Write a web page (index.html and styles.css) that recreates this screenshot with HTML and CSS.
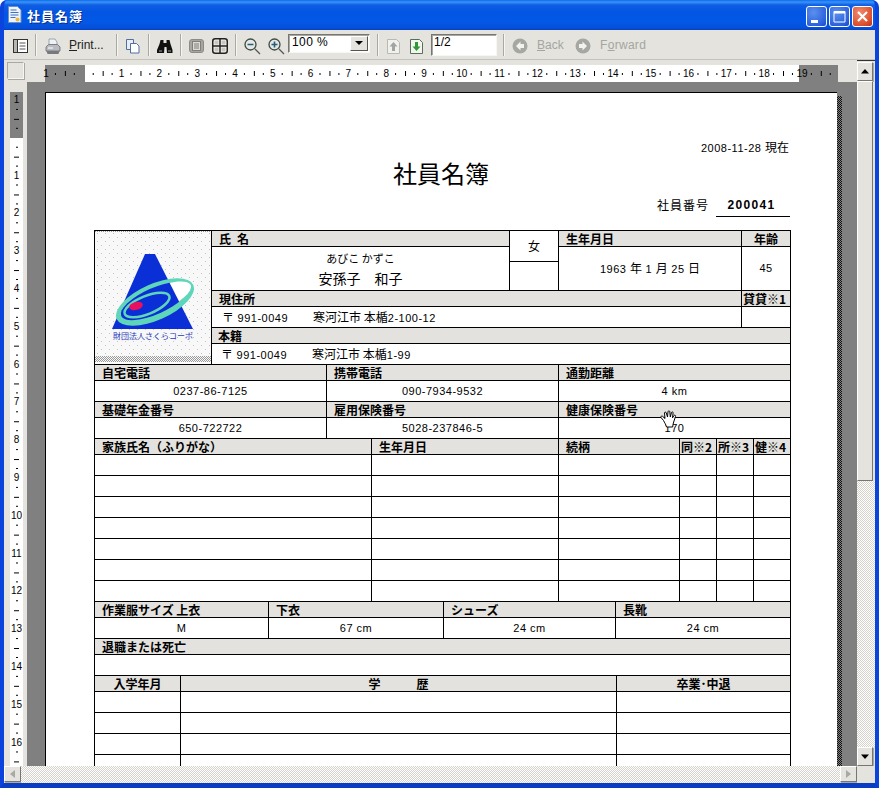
FILE: index.html
```html
<!DOCTYPE html>
<html lang="ja">
<head>
<meta charset="utf-8">
<title>社員名簿</title>
<link rel="stylesheet" href="styles.css">
</head>
<body>
<div class="window">
  <header class="titlebar">
    <svg class="title-icon" width="15" height="17" viewBox="0 0 15 17"><path d="M1.5.5h9l3.5 3.5v12.500h-12.500z" fill="#eef3fb" stroke="#6d8fc4"/><path d="M3.500 4h6M3.500 6.500h8M3.500 9h8M3.500 11.500h5" stroke="#3f6fc0"/><circle cx="10.500" cy="13.500" r="2" fill="#e8b93a"/></svg>
    <span class="title-text">社員名簿</span>
    <div class="caption-buttons">
      <span class="cap cap-blue"><svg width="21" height="21" viewBox="0 0 21 21"><rect x="5" y="14" width="7" height="3" fill="#fff"/></svg></span>
      <span class="cap cap-blue"><svg width="21" height="21" viewBox="0 0 21 21"><path d="M5 5.500h11v10.500h-11z" fill="none" stroke="#fff"/><rect x="5" y="5" width="11" height="2.500" fill="#fff"/></svg></span>
      <span class="cap cap-red"><svg width="21" height="21" viewBox="0 0 21 21"><path d="M6 6l9 9M15 6l-9 9" stroke="#fff" stroke-width="2.200"/></svg></span>
    </div>
  </header>

  <div class="toolbar">
    <svg class="ico i-panel" width="15" height="14" viewBox="0 0 15 14"><rect x=".5" y=".5" width="14" height="13" fill="#fff" stroke="#333"/><rect x="1" y="1" width="3.500" height="12" fill="#b8b6ae"/><path d="M4.500 1v12" stroke="#333"/><path d="M6.500 4h6M6.500 7h6M6.500 10h6" stroke="#555"/></svg>
    <i class="sep s-a"></i>
    <svg class="ico i-print" width="16" height="17" viewBox="0 0 16 17"><path d="M4 1h6l2 3v4H4z" fill="#eef2f6" stroke="#8a93a0" stroke-width=".8"/><path d="M1 9l2.500-2.500h9L15 9v4H1z" fill="#b9bbc0" stroke="#666a70" stroke-width=".8"/><path d="M1.500 13h13l-1 3h-11z" fill="#77797e"/><path d="M3 10h5" stroke="#fff"/></svg>
    <span class="tb-label l-print"><u>P</u>rint...</span>
    <i class="sep s-b"></i>
    <svg class="ico i-copy" width="14" height="15" viewBox="0 0 14 15"><path d="M.5.500h7v10h-7z" fill="#e8edf6" stroke="#52709f"/><path d="M4.500 4.500h6l2.500 2.500v7h-8.500z" fill="#fff" stroke="#52709f"/></svg>
    <i class="sep s-c"></i>
    <svg class="ico i-bino" width="16" height="15" viewBox="0 0 16 15"><path d="M3.500 1h3v3h3v-3h3l1 4 2 6v3h-5.500l-.5-6h-2l-.5 6H0v-3l2.500-6z" fill="#111"/><path d="M2 11h3v2H2zM11 11h3v2h-3z" fill="#5a5a5a"/></svg>
    <i class="sep s-d"></i>
    <svg class="ico i-single" width="15" height="14" viewBox="0 0 15 14"><rect x=".5" y=".5" width="14" height="13" rx="2.500" fill="#a7a6a0" stroke="#8c8b86"/><rect x="3.500" y="2.500" width="8" height="9" fill="#dcdbd5" stroke="#807f7a"/><path d="M5 5h5M5 7h5M5 9h5" stroke="#807f7a"/></svg>
    <svg class="ico i-grid" width="16" height="16" viewBox="0 0 16 16"><rect x=".75" y=".75" width="14.500" height="14.500" rx="2.500" fill="#f4f3ee" stroke="#222" stroke-width="1.500"/><path d="M8 1v14M1 8h14" stroke="#222" stroke-width="1.500"/><path d="M2.500 2.500h4v4h-4zM9.500 2.500h4v4h-4zM2.500 9.500h4v4h-4zM9.500 9.500h4v4h-4z" fill="#c8c7c1"/></svg>
    <i class="sep s-e"></i>
    <svg class="ico i-zoom1" width="17" height="17" viewBox="0 0 17 17"><circle cx="6.500" cy="6.500" r="5.500" fill="#e4e8e4" stroke="#3f4a44" stroke-width="1.300"/><path d="M3.500 6.500h6" stroke="#245c7d" stroke-width="1.600"/><path d="M11 11l5 5" stroke="#555" stroke-width="1.300"/></svg>
    <svg class="ico i-zoom2" width="17" height="17" viewBox="0 0 17 17"><circle cx="6.500" cy="6.500" r="5.500" fill="#e4e8e4" stroke="#3f4a44" stroke-width="1.300"/><path d="M3.500 6.500h6M6.500 3.500v6" stroke="#245c7d" stroke-width="1.600"/><path d="M11 11l5 5" stroke="#555" stroke-width="1.300"/></svg>
    <div class="combo"><span class="combo-text">100 %</span><span class="combo-btn"><svg width="8" height="4" viewBox="0 0 8 4"><path d="M0 0h8L4 4z" fill="#000"/></svg></span></div>
    <i class="sep s-f"></i>
    <svg class="ico i-up" width="13" height="15" viewBox="0 0 13 15"><path d="M.5.500h9l3 3v11h-12z" fill="#f1f0ec" stroke="#b9b8b2"/><path d="M6.500 3l4 4.500H8v4.500H5V7.500H2.500z" fill="#9fa5a3"/></svg>
    <svg class="ico i-down" width="13" height="15" viewBox="0 0 13 15"><path d="M.5.500h9l3 3v11h-12z" fill="#f5f4ee" stroke="#55705a"/><path d="M5 3h3v4.500h2.500l-4 4.500-4-4.500H5z" fill="#2f9a35"/></svg>
    <div class="pagebox">1/2</div>
    <i class="sep s-g"></i>
    <svg class="ico i-back" width="16" height="16" viewBox="0 0 16 16"><circle cx="8" cy="8" r="7.500" fill="#a6a6a2"/><path d="M8.500 3.500L4 8l4.500 4.500V10H12V6H8.500z" fill="#f2f2ee"/></svg>
    <span class="tb-label dis l-back"><u>B</u>ack</span>
    <svg class="ico i-fwd" width="16" height="16" viewBox="0 0 16 16"><circle cx="8" cy="8" r="7.500" fill="#a6a6a2"/><path d="M7.500 3.500L12 8l-4.500 4.500V10H4V6h3.500z" fill="#f2f2ee"/></svg>
    <span class="tb-label dis l-fwd">F<u>o</u>rward</span>
  </div>

  <div class="client">
    <div class="leftcol">
      <div class="rulerbar">
        <div class="corner"></div>
        <div class="hruler"><div class="hr-inner"><span>1</span><span></span><span>1</span><span>2</span><span>3</span><span>4</span><span>5</span><span>6</span><span>7</span><span>8</span><span>9</span><span>10</span><span>11</span><span>12</span><span>13</span><span>14</span><span>15</span><span>16</span><span>17</span><span>18</span><span>19</span></div></div>
      </div>
      <div class="workarea">
        <div class="vcol"><div class="vruler"><div class="vr-inner"><span>1</span><span></span><span>1</span><span>2</span><span>3</span><span>4</span><span>5</span><span>6</span><span>7</span><span>8</span><span>9</span><span>10</span><span>11</span><span>12</span><span>13</span><span>14</span><span>15</span><span>16</span></div></div></div>
        <div class="view">
          <main class="page">
            <p class="date">2008-11-28 <span class="j">現在</span></p>
            <h1 class="doc-title">社員名簿</h1>
            <div class="empno"><span class="j empno-label">社員番号</span><b class="empno-val">200041</b></div>

            <section class="form">
              <div class="grid g-top">
                <div class="c photo">
                  <svg width="116" height="131" viewBox="0 0 116 131">
                    <defs>
                      <pattern id="dots" width="8" height="8" patternUnits="userSpaceOnUse"><rect x="2" y="2" width="1" height="1" fill="#c4c4c4"/><rect x="6" y="6" width="1" height="1" fill="#c4c4c4"/></pattern>
                      <pattern id="dith" width="2" height="2" patternUnits="userSpaceOnUse"><rect width="1" height="1" fill="#999"/><rect x="1" y="1" width="1" height="1" fill="#999"/></pattern>
                      <clipPath id="inner"><ellipse cx="60" cy="70" rx="37" ry="13" transform="rotate(-24 60 70)"/></clipPath>
                    </defs>
                    <rect width="116" height="131" fill="#f8f8f8"/>
                    <rect width="116" height="131" fill="url(#dots)"/>
                    <rect y="0" width="116" height="1" fill="url(#dith)"/>
                    <rect y="125" width="116" height="6" fill="url(#dith)"/>
                    <path d="M50 23h10l38 75H17z" fill="#0b2fd6"/>
                    <ellipse cx="60" cy="71" rx="42" ry="18" transform="rotate(-24 60 71)" fill="#5fd6ba"/>
                    <ellipse cx="62" cy="69" rx="37" ry="12" transform="rotate(-24 62 69)" fill="#fff"/>
                    <path d="M50 23h10l38 75H17z" fill="#0b2fd6" clip-path="url(#inner)"/>
                    <ellipse cx="52" cy="74" rx="24" ry="9" transform="rotate(-22 52 74)" fill="none" stroke="#5fd6ba" stroke-width="2.500"/>
                    <ellipse cx="41" cy="75" rx="7" ry="4" transform="rotate(-15 41 75)" fill="#e8115f"/>
                    <text class="logo-text" x="18" y="108">財団法人さくらコーポ</text>
                  </svg>
                </div>
                <div class="c h name-h">氏&ensp;名</div>
                <div class="c sex">女</div>
                <div class="c sex2"></div>
                <div class="c h birth-h">生年月日</div>
                <div class="c h center age-h">年齢</div>
                <div class="c name-v"><span class="kana">あびこ かずこ</span><span class="kanji">安孫子&emsp;和子</span></div>
                <div class="c val birth-v">1963 <span class="j">年</span> 1 <span class="j">月</span> 25 <span class="j">日</span></div>
                <div class="c val age-v">45</div>
                <div class="c h addr-h">現住所</div>
                <div class="c h rent-h">貸貸※1</div>
                <div class="c val addr addr-v"><span class="j">〒</span> 991-0049<span class="j gap">寒河江市 本楯</span>2-100-12</div>
                <div class="c rent-v"></div>
                <div class="c h reg-h">本籍</div>
                <div class="c val addr reg-v"><span class="j">〒</span> 991-0049<span class="j gap">寒河江市 本楯</span>1-99</div>
              </div>

              <div class="grid g-3">
                <div class="c h">自宅電話</div><div class="c h">携帯電話</div><div class="c h">通勤距離</div>
                <div class="c v val">0237-86-7125</div><div class="c v val">090-7934-9532</div><div class="c v val">4 km</div>
                <div class="c h">基礎年金番号</div><div class="c h">雇用保険番号</div><div class="c h">健康保険番号</div>
                <div class="c v val">650-722722</div><div class="c v val">5028-237846-5</div><div class="c v val">170</div>
              </div>

              <div class="grid g-family">
                <div class="c h">家族氏名（ふりがな）</div><div class="c h">生年月日</div><div class="c h">続柄</div><div class="c h tight">同※2</div><div class="c h tight">所※3</div><div class="c h tight">健※4</div>
                <div class="c v"></div><div class="c v"></div><div class="c v"></div><div class="c v"></div><div class="c v"></div><div class="c v"></div>
                <div class="c v"></div><div class="c v"></div><div class="c v"></div><div class="c v"></div><div class="c v"></div><div class="c v"></div>
                <div class="c v"></div><div class="c v"></div><div class="c v"></div><div class="c v"></div><div class="c v"></div><div class="c v"></div>
                <div class="c v"></div><div class="c v"></div><div class="c v"></div><div class="c v"></div><div class="c v"></div><div class="c v"></div>
                <div class="c v"></div><div class="c v"></div><div class="c v"></div><div class="c v"></div><div class="c v"></div><div class="c v"></div>
                <div class="c v"></div><div class="c v"></div><div class="c v"></div><div class="c v"></div><div class="c v"></div><div class="c v"></div>
                <div class="c v"></div><div class="c v"></div><div class="c v"></div><div class="c v"></div><div class="c v"></div><div class="c v"></div>
              </div>

              <div class="grid g-size">
                <div class="c h">作業服サイズ 上衣</div><div class="c h">下衣</div><div class="c h">シューズ</div><div class="c h">長靴</div>
                <div class="c v val">M</div><div class="c v val">67 cm</div><div class="c v val">24 cm</div><div class="c v val">24 cm</div>
              </div>

              <div class="grid g-one">
                <div class="c h">退職または死亡</div>
                <div class="c v"></div>
              </div>

              <div class="grid g-edu">
                <div class="c h center">入学年月</div><div class="c h center">学&emsp;&emsp;&emsp;歴</div><div class="c h center">卒業･中退</div>
                <div class="c v"></div><div class="c v"></div><div class="c v"></div>
                <div class="c v"></div><div class="c v"></div><div class="c v"></div>
                <div class="c v"></div><div class="c v"></div><div class="c v"></div>
                <div class="c v"></div><div class="c v"></div><div class="c v"></div>
              </div>
            </section>

            <svg class="hand" width="18" height="22" viewBox="0 0 18 20"><path d="M3.500 10.500L1 7.500c-.6-1 .8-2 1.600-1.200L5 8.500 4.500 3c0-1.200 1.600-1.200 1.800 0L7.500 7 8 1.700c.1-1.100 1.700-1.100 1.800 0L10.300 7l1.200-4.500c.3-1 1.700-.7 1.600.3l-.6 5 1.600-2.300c.6-.8 1.800-.1 1.400.9l-1.800 5.600c-.4 1.500-1 3-1 5H6.500c-.3-2-2-4.500-3-6.500z" fill="#fff" stroke="#000"/></svg>
          </main>
          <div class="shadow"></div>
        </div>
      </div>
    </div>
    <aside class="vscroll">
      <span class="sbtn sb-up"><svg width="8" height="5" viewBox="0 0 8 5"><path d="M0 4.500h8L4 0z" fill="#000"/></svg></span>
      <div class="vthumb"></div>
      <div class="vtrack"></div>
      <span class="sbtn sb-down"><svg width="8" height="5" viewBox="0 0 8 5"><path d="M0 .5h8L4 5z" fill="#000"/></svg></span>
    </aside>
  </div>
  <div class="hscroll">
    <span class="sbtn sb-h"><svg width="5" height="8" viewBox="0 0 5 8"><path d="M5 0v8L0 4z" fill="#a8a8a4"/></svg></span>
    <div class="htrack"></div>
    <span class="sbtn sb-h"><svg width="5" height="8" viewBox="0 0 5 8"><path d="M0 0v8l5-4z" fill="#a8a8a4"/></svg></span>
    <div class="hcorner"></div>
  </div>
</div>
</body>
</html>
```

FILE: styles.css
```css
* { box-sizing: border-box; }
html, body { margin: 0; padding: 0; width: 879px; height: 788px; overflow: hidden; background: #fff; }
body { font-family: "Liberation Sans", "Noto Sans CJK JP", sans-serif; font-size: 12px; color: #000; }

.window {
  width: 879px; height: 788px; display: flex; flex-direction: column;
  background: #0a3fd0; border-radius: 7px 7px 0 0; overflow: hidden;
  border-left: 4px solid #0a44dc; border-right: 4px solid #0a44dc; border-bottom: 5px solid #0b3cc4;
}
.titlebar {
  height: 30px; margin: 0 -4px; padding-left: 7px; display: flex; align-items: center; flex: none;
  background: linear-gradient(#0a6cf0 0, #3b93f5 2px, #0f5fe4 5px, #0355e3 12px, #0358e6 22px, #0650da 28px, #0342bd 30px);
}
.title-icon { flex: none; margin-top: -1px; }
.title-text {
  margin-left: 5px; color: #fff; font: bold 13px "Noto Sans CJK JP", sans-serif; letter-spacing: 1px;
  text-shadow: 1px 1px 0 #0a2f8e;
}
.caption-buttons { margin-left: auto; margin-right: 6px; display: flex; gap: 2px; margin-top: 2px; }
.cap { width: 21px; height: 21px; border: 1px solid #fff; border-radius: 3px; display: block; overflow: hidden; }
.cap svg { display: block; margin: -1px; }
.cap-blue { background: radial-gradient(circle at 35% 30%, #5b90ee, #2a5fdc 75%, #1c47c0); }
.cap-red { background: radial-gradient(circle at 35% 30%, #f08a70, #dc4f2c 70%, #b8301a); }

.toolbar {
  height: 30px; flex: none; display: flex; align-items: center; position: relative;
  background: #e4e3de; border-bottom: 1px solid #c4c3bd;
}
.ico { flex: none; display: block; margin-top: 3px; }
.sep { flex: none; width: 1px; height: 22px; background: #a9a8a2; box-shadow: 1px 0 0 #f6f6f2; }
.i-panel { margin-left: 9px; }
.s-a { margin-left: 7px; }
.i-print { margin-left: 9px; }
.tb-label { font: 12px "Liberation Sans", sans-serif; white-space: nowrap; color: #222; flex: none; }
.l-print { margin-left: 8px; width: 36px; }
.s-b { margin-left: 11px; }
.i-copy { margin-left: 9px; }
.s-c { margin-left: 8px; }
.i-bino { margin-left: 8px; }
.s-d { margin-left: 7px; }
.i-single { margin-left: 8px; }
.i-grid { margin-left: 8px; }
.s-e { margin-left: 7px; }
.i-zoom1 { margin-left: 8px; }
.i-zoom2 { margin-left: 7px; }
.combo {
  flex: none; margin-left: 3px; margin-top: -3px; width: 82px; height: 19px; display: flex; align-items: stretch;
  background: #fff; border: 1px solid; border-color: #77766f #f6f6f2 #f6f6f2 #77766f; box-shadow: inset 1px 1px 0 #a9a8a2;
}
.combo-text { flex: 1; padding-left: 3px; font: 12px/14px "Liberation Sans", sans-serif; letter-spacing: .4px; }
.combo-btn {
  width: 18px; margin: 1px; background: #e4e3de; display: flex; align-items: center; justify-content: center;
  border: 1px solid; border-color: #fff #55544f #55544f #fff;
}
.combo-btn svg { display: block; }
.s-f { margin-left: 7px; }
.i-up { margin-left: 9px; }
.i-down { margin-left: 10px; }
.pagebox {
  flex: none; margin-left: 8px; width: 66px; height: 22px; background: #fff; padding-left: 2px;
  font: 12px/15px "Liberation Sans", sans-serif; border: 1px solid; border-color: #77766f #f6f6f2 #f6f6f2 #77766f;
  box-shadow: inset 1px 1px 0 #a9a8a2;
}
.s-g { margin-left: 6px; }
.i-back { margin-left: 8px; }
.dis { color: #a5a5a1; }
.l-back { margin-left: 9px; width: 29px; }
.i-fwd { margin-left: 9px; }
.l-fwd { margin-left: 9px; letter-spacing: .3px; }

.client { flex: 1; min-height: 0; display: flex; background: #e4e3de; }
.leftcol { width: 853px; flex: none; display: flex; flex-direction: column; min-height: 0; }
.rulerbar { height: 22px; flex: none; display: flex; background: #e4e3de; }
.corner { width: 17px; height: 17px; margin: 2px 0 0 3px; flex: none; background: #e4e3de; border: 1px solid; border-color: #a9a8a2 #f6f6f2 #f6f6f2 #a9a8a2; box-shadow: 1px 1px 0 #a9a8a2; }
.hruler {
  width: 793px; height: 17px; margin: 5px 0 0 21px; flex: none;
  background: linear-gradient(90deg, #808080 40px, #fff 40px, #fff 754px, #808080 754px);
}
.hr-inner {
  display: flex; height: 17px; margin-left: -5px; width: 798px; overflow: visible;
  font: 10px/17px "Liberation Sans", sans-serif;
  background-image:
    linear-gradient(90deg, transparent 15px, #000 15px, #000 16px, transparent 16px, transparent 34px, #000 34px, #000 35px, transparent 35px),
    linear-gradient(90deg, transparent 25px, #000 25px, #000 26px, transparent 26px);
  background-size: 37.8px 2px, 37.8px 5px;
  background-repeat: repeat-x;
  background-position: 0 8px, 0 6px;
}
.hr-inner span { flex: none; width: 12px; margin-right: 25.8px; text-align: center; }

.workarea { flex: 1; min-height: 0; display: flex; }
.vcol { width: 23px; flex: none; padding: 10px 4px 0 6px; background: #e4e3de; overflow: hidden; }
.vruler {
  height: 100%; overflow: hidden;
  background: linear-gradient(#808080 46px, #fff 46px);
}
.vr-inner {
  margin-top: 2px; height: 720px;
  font: 10px/12px "Liberation Sans", sans-serif; text-align: center;
  background-image:
    linear-gradient(transparent 15px, #000 15px, #000 16px, transparent 16px, transparent 34px, #000 34px, #000 35px, transparent 35px),
    linear-gradient(transparent 25px, #000 25px, #000 26px, transparent 26px);
  background-size: 2px 37.8px, 5px 37.8px;
  background-repeat: repeat-y;
  background-position: 6px 0, 4px 0;
}
.vr-inner span { display: block; height: 37.8px; }

.view { flex: 1; min-width: 0; display: flex; background: #808080; padding: 10px 0 0 18px; overflow: hidden; align-items: stretch; }
.page {
  width: 792px; flex: none; position: relative; overflow: hidden; background: #fff;
  border-left: 1px solid #000; border-top: 1px solid #000; padding: 45px 47px 0 48px;
  font-family: "Liberation Sans", "Noto Sans CJK JP", sans-serif;
}
.shadow {
  width: 5px; margin-top: 4px; flex: none;
  background: repeating-conic-gradient(#111 0 25%, #808080 0 50%) 0 0 / 2px 2px;
}
.j { font-family: "Noto Sans CJK JP", sans-serif; font-size: 12px; letter-spacing: 0; }
.date { margin: 0; text-align: right; padding-right: 1px; font-size: 11px; line-height: 18px; height: 18px; letter-spacing: .5px; }
.doc-title { margin: 0; height: 36px; text-align: center; font: 400 24px/34px "Noto Sans CJK JP", sans-serif; padding-right: 2px; }
.empno { margin-top: 6px; height: 21px; display: flex; justify-content: flex-end; align-items: flex-start; line-height: 14px; }
.empno-label { letter-spacing: 1px; }
.empno-val {
  width: 74px; height: 19px; margin-left: 7px; padding-right: 3px; text-align: center; border-bottom: 1px solid #000;
  font: bold 12px/15px "Liberation Sans", sans-serif; letter-spacing: 1.300px;
}
.form { margin-top: 11px; border-left: 1px solid #000; border-top: 1px solid #000; width: 697px; }
.grid { display: grid; }
.c { border-right: 1px solid #000; border-bottom: 1px solid #000; min-width: 0; overflow: hidden; white-space: nowrap; }
.h {
  height: 16px; padding-left: 7px; background: #e3e2de;
  font: 700 12px/15px "Noto Sans CJK JP", sans-serif;
}
.h.tight { padding-left: 1px; }
.h.center { padding-left: 0; text-align: center; }
.v { height: 21px; }
.val { font-size: 11px; line-height: 20px; text-align: center; letter-spacing: .5px; }

.g-top { grid-template-columns: 117px 298px 49px 183px 49px; grid-template-rows: 16px 15px 29px 16px 21px 16px 21px; }
.photo { grid-column: 1; grid-row: 1 / 8; }
.photo svg { display: block; }
.logo-text { font: 8px "Noto Sans CJK JP", sans-serif; fill: #1f38c0; }
.name-h { grid-column: 2; grid-row: 1; }
.sex { grid-column: 3; grid-row: 1 / 3; text-align: center; line-height: 29px; font-family: "Noto Sans CJK JP", sans-serif; }
.sex2 { grid-column: 3; grid-row: 3; }
.birth-h { grid-column: 4; grid-row: 1; }
.age-h { grid-column: 5; grid-row: 1; }
.name-v { grid-column: 2; grid-row: 2 / 4; display: flex; flex-direction: column; align-items: center; font-family: "Noto Sans CJK JP", sans-serif; }
.kana { font-size: 11px; line-height: 19px; margin-top: 2px; }
.kanji { font-size: 14px; line-height: 20px; }
.birth-v { grid-column: 4; grid-row: 2 / 4; line-height: 42px; }
.age-v { grid-column: 5; grid-row: 2 / 4; line-height: 42px; }
.addr-h { grid-column: 2 / 5; grid-row: 4; }
.rent-h { grid-column: 5; grid-row: 4; padding-left: 1px; }
.addr { text-align: left; padding-left: 10px; }
.addr-v { grid-column: 2 / 5; grid-row: 5; }
.rent-v { grid-column: 5; grid-row: 5; }
.reg-h { grid-column: 2 / 6; grid-row: 6; padding-left: 6px; }
.reg-v { grid-column: 2 / 6; grid-row: 7; padding-left: 9px; }
.gap { margin-left: 25px; }

.g-3 { grid-template-columns: 232px 232px 232px; }
.g-family { grid-template-columns: 277px 187px 121px 37px 37px 37px; }
.g-size { grid-template-columns: 174px 175px 172px 175px; }
.g-one { grid-template-columns: 696px; }
.g-edu { grid-template-columns: 86px 436px 174px; }

.hand { position: absolute; left: 614px; top: 316px; }

.vscroll { width: 18px; flex: none; display: flex; flex-direction: column; padding-top: 1px; background: #e4e3de; border-top: 1px solid #333; }
.sbtn {
  flex: none; display: flex; align-items: center; justify-content: center; background: #e4e3de;
  border: 1px solid; border-color: #fff #77766f #77766f #fff; box-shadow: 1px 1px 0 #a9a8a2;
}
.sb-up, .sb-down { width: 16px; height: 19px; }
.sbtn svg { display: block; }
.vthumb { width: 16px; height: 400px; flex: none; background: #e4e3de; border: 1px solid; border-color: #fff #77766f #77766f #fff; }
.vtrack, .htrack { flex: 1; background: repeating-conic-gradient(#fff 0 25%, #d4d2ca 0 50%) 0 0 / 2px 2px; }
.hscroll { height: 17px; flex: none; display: flex; background: #e4e3de; }
.sb-h { width: 17px; height: 16px; }
.hcorner { width: 18px; flex: none; background: #e4e3de; }
```
